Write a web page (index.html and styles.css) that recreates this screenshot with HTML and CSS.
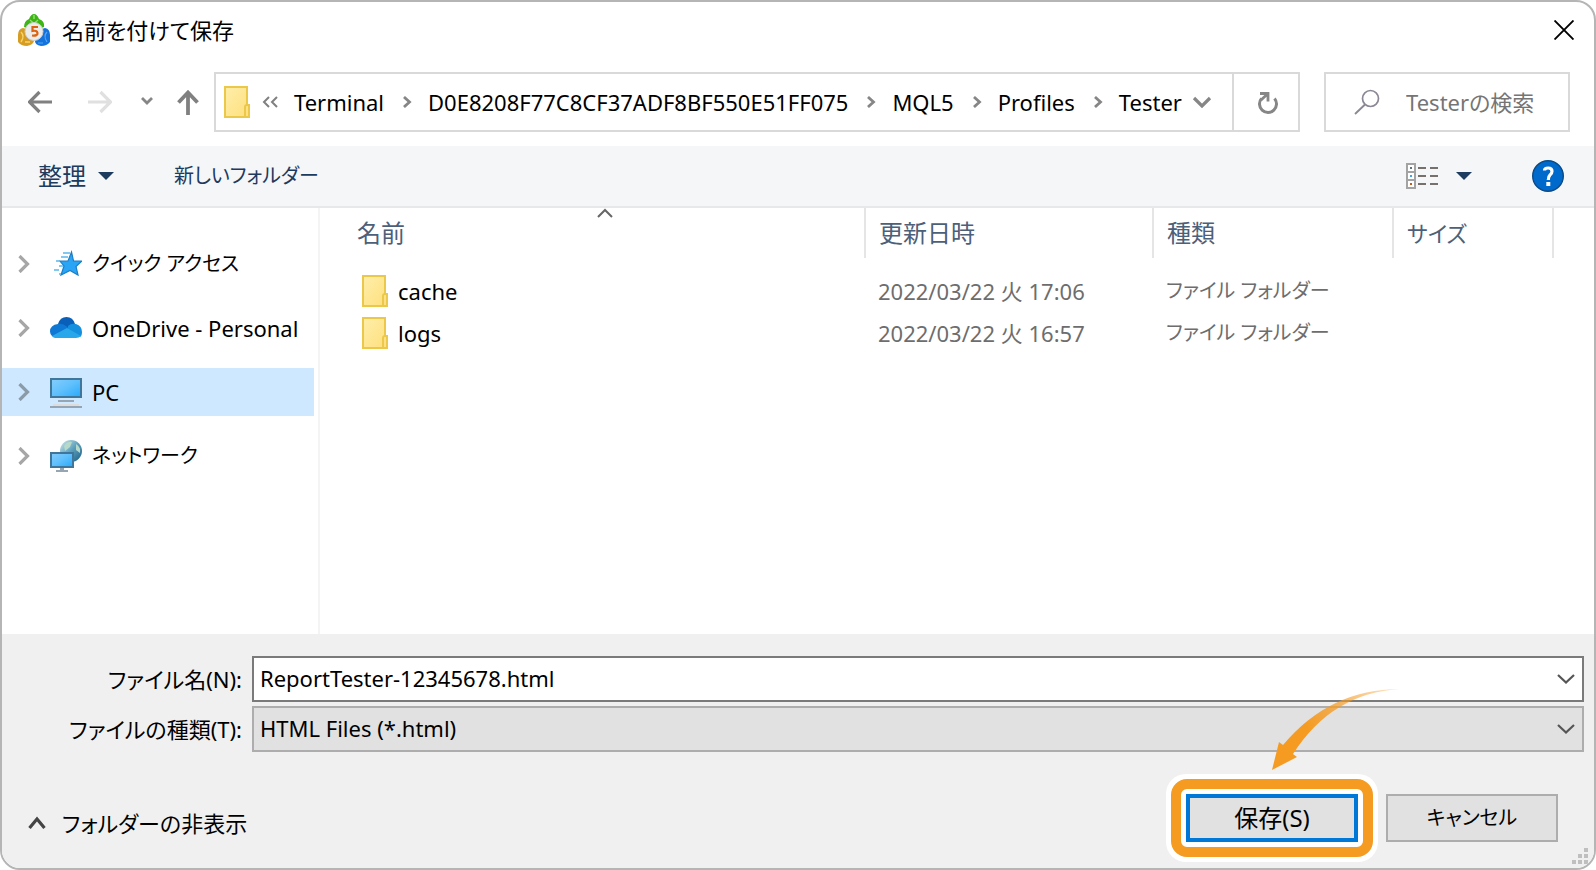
FILE: index.html
```html
<!DOCTYPE html>
<html lang="ja">
<head>
<meta charset="utf-8">
<meta name="viewport" content="width=device-width, initial-scale=1">
<title>名前を付けて保存</title>
<link rel="stylesheet" href="styles.css">
</head>
<body>
<svg class="defs" aria-hidden="true">
  <defs>
    <linearGradient id="folder-fill" x1="0" y1="0" x2="1" y2="1"><stop offset="0" stop-color="#ffeeaa"/><stop offset="1" stop-color="#fedf7c"/></linearGradient>
    <linearGradient id="screen-fill" x1="0" y1="0" x2="1" y2="1"><stop offset="0" stop-color="#86cdfd"/><stop offset="0.5" stop-color="#5fc0fc"/><stop offset="1" stop-color="#26a9fb"/></linearGradient>
    <linearGradient id="globe-fill" x1="0" y1="0" x2="1" y2="1"><stop offset="0" stop-color="#d5e9ea"/><stop offset="0.5" stop-color="#5ba0bd"/><stop offset="1" stop-color="#1c5b80"/></linearGradient>
    <linearGradient id="arrow-fill" gradientUnits="userSpaceOnUse" x1="128" y1="0" x2="40" y2="50"><stop offset="0" stop-color="#f59b22" stop-opacity="0.25"/><stop offset="1" stop-color="#f59b22"/></linearGradient>
    <symbol id="folder" viewBox="0 0 26 32"><path d="M1 1H23V19H25V31H1Z" fill="url(#folder-fill)" stroke="#ecc84a" stroke-width="2"/><path d="M21 31V21q0-2 2-2" fill="none" stroke="#ecc84a" stroke-width="2"/></symbol>
    <symbol id="crumb-arrow" viewBox="0 0 10 12"><path d="M2 1L7.500 6L2 11" fill="none" stroke="#868686" stroke-width="2.800"/></symbol>
    <symbol id="tree-arrow" viewBox="0 0 12 18"><path d="M1.500 1L9.500 9L1.500 17" fill="none" stroke="currentColor" stroke-width="3.200"/></symbol>
    <symbol id="drop" viewBox="0 0 16 8"><path d="M0 0H16L8 8Z" fill="#1d3a5f"/></symbol>
    <symbol id="combo-arrow" viewBox="0 0 18 10"><path d="M1 1L9 8.500L17 1" fill="none" stroke="#555" stroke-width="2.200"/></symbol>
  </defs>
</svg>
<main class="dialog">
  <header class="titlebar">
    <svg class="app-icon" viewBox="0 0 32 32" aria-hidden="true">
      <path d="M6 13Q6 7 11 5Q13 0 16 0T21 5Q27 7 26 13L16 17Z" fill="#3db615"/>
      <path d="M16 1V5M12 6Q15 8 15 10M20 6Q17 8 17 10" stroke="#8de36b" stroke-width="1.500" fill="none"/>
      <path d="M5 14Q0 15 0 21V28Q3 32 9 32Q15 31 16 27L12 16Z" fill="#d69d22"/>
      <path d="M3 18Q7 22 3 28M7 28H12" stroke="#f7d267" stroke-width="1.500" fill="none"/>
      <path d="M27 14Q32 15 32 21V28Q29 32 23 32Q17 31 17 27L21 16Z" fill="#1472dc"/>
      <path d="M29 18Q25 22 29 28M20 29H25" stroke="#54a5f6" stroke-width="1.200" fill="none"/>
      <circle cx="16" cy="17.500" r="9" fill="#ececea" stroke="#cfcfcf"/>
      <path d="M20 13H14.500V17Q19 16 19.500 19T14 21.500" fill="none" stroke="#dd6310" stroke-width="2.200"/>
    </svg>
    <h1 class="title">名前を付けて保存</h1>
    <button class="icon-button" aria-label="閉じる"><svg width="20" height="20" viewBox="0 0 20 20"><path d="M0.500 0.500L19.500 19.500M19.500 0.500L0.500 19.500" stroke="#000" stroke-width="1.900"/></svg></button>
  </header>

  <nav class="navbar">
    <div class="history">
      <button class="icon-button" aria-label="戻る"><svg width="24" height="24" viewBox="0 0 24 24"><path d="M24 12H2M11.500 2L1.500 12L11.500 22" fill="none" stroke="#808080" stroke-width="3.200"/></svg></button>
      <button class="icon-button forward" aria-label="進む"><svg width="24" height="24" viewBox="0 0 24 24"><path d="M0 12H22M12.500 2L22.500 12L12.500 22" fill="none" stroke="#e0e0e0" stroke-width="3.200"/></svg></button>
      <button class="icon-button recent" aria-label="最近表示した場所"><svg width="12" height="24" viewBox="0 0 12 24"><path d="M1 8L6 13L11 8" fill="none" stroke="#868686" stroke-width="2.800"/></svg></button>
      <button class="icon-button up" aria-label="上へ"><svg width="22" height="26" viewBox="0 0 22 26"><path d="M11 26V3M1.500 13.500L11 3.500L20.500 13.500" fill="none" stroke="#808080" stroke-width="3.800"/></svg></button>
    </div>
    <div class="address">
      <div class="crumbs">
        <svg class="folder" aria-hidden="true"><use href="#folder"/></svg>
        <svg class="overflow" width="16" height="12" viewBox="0 0 16 12"><path d="M7 1L2 6L7 11M15 1L10 6L15 11" fill="none" stroke="#808080" stroke-width="2"/></svg>
        <button class="crumb">Terminal</button><svg class="sep"><use href="#crumb-arrow"/></svg>
        <button class="crumb">D0E8208F77C8CF37ADF8BF550E51FF075</button><svg class="sep"><use href="#crumb-arrow"/></svg>
        <button class="crumb">MQL5</button><svg class="sep"><use href="#crumb-arrow"/></svg>
        <button class="crumb">Profiles</button><svg class="sep"><use href="#crumb-arrow"/></svg>
        <button class="crumb">Tester</button>
        <button class="icon-button more" aria-label="以前の場所"><svg width="20" height="12" viewBox="0 0 20 12"><path d="M2 2L10 10L18 2" fill="none" stroke="#868686" stroke-width="3.200"/></svg></button>
      </div>
      <button class="icon-button refresh" aria-label="最新の情報に更新"><svg width="20" height="22" viewBox="0 0 20 22"><path d="M3.500 6.500A8.500 8.500 0 1 0 16.500 6.500" fill="none" stroke="#868686" stroke-width="3"/><path d="M2 1.500H10V9.500M9.500 2L3 8" fill="none" stroke="#868686" stroke-width="2.800"/></svg></button>
    </div>
    <label class="search">
      <svg width="26" height="26" viewBox="0 0 26 26" aria-hidden="true"><circle cx="16.500" cy="9.500" r="8" fill="none" stroke="#8c8794" stroke-width="1.700"/><path d="M11 15.500L1 25" stroke="#8c8794" stroke-width="1.900"/></svg>
      <input type="text" class="search-input" placeholder="Testerの検索" aria-label="Testerの検索">
    </label>
  </nav>

  <div class="toolbar">
    <button class="tool">整理<svg class="drop"><use href="#drop"/></svg></button>
    <button class="tool kana">新しいフォルダー</button>
    <button class="tool view" aria-label="表示方法の変更">
      <svg width="32" height="26" viewBox="0 0 32 26"><path d="M1 1H9V25H1ZM1 9H9M1 17H9" fill="#fff" stroke="#a3a3a3" stroke-width="2"/><path d="M12 5H20M24 5H32M12 13H20M24 13H32M12 21H20M24 21H32" stroke="#77716d" stroke-width="2"/><path d="M4 4H6V6H4Z" fill="#5f7280"/><path d="M4 12H6V14H4Z" fill="#3da4e9"/><path d="M4 20H6V22H4Z" fill="#c75b12"/></svg>
      <svg class="drop"><use href="#drop"/></svg>
    </button>
    <button class="icon-button" aria-label="ヘルプ"><svg width="32" height="32" viewBox="0 0 32 32"><circle cx="16" cy="16" r="15.300" fill="#0069cc" stroke="#0b4a85" stroke-width="1.400"/><path d="M12.500 10.500Q12.500 8 16.200 8Q20 8 20 11.300Q20 13.500 18 15Q16.300 16.500 16.300 20" fill="none" stroke="#fff" stroke-width="3.200"/><path d="M14.300 22H18.300V26H14.300Z" fill="#fff"/></svg></button>
  </div>

  <div class="content">
    <ul class="tree">
      <li><a class="node kana" href="#"><svg class="tree-arrow"><use href="#tree-arrow"/></svg>
        <svg class="place" viewBox="0 0 32 32"><path d="M21.500 4L23.500 13H32L26 18.500L28 27L20 22.500L11 27L14 18L10 13H18Z" fill="#2aa5f5" stroke="#1b7fc8" stroke-width="1.200"/><path d="M13 5H20M11 9H18M6 13H10M9 18H13M4 22H9M9 26H11" stroke="#58b7ee" stroke-width="1.500"/></svg>クイック アクセス</a></li>
      <li><a class="node" href="#"><svg class="tree-arrow"><use href="#tree-arrow"/></svg>
        <svg class="place" viewBox="0 0 32 32"><path d="M8 12Q10 5 16.500 5T25 12L18 19Z" fill="#0a5fb8"/><path d="M2 24Q0 22 0 19.500Q0 13 8 12Q12 11 16 14L20 17L6 26Z" fill="#0f78d4"/><path d="M18 14Q21 11 26 12Q32 14 32 20Q32 24 30 25L18 19Z" fill="#1490df"/><path d="M2 24L17 16L31 24Q29 26 26 26H6Q3 26 2 24Z" fill="#28a8ea"/></svg>OneDrive - Personal</a></li>
      <li><a class="node selected" href="#" aria-current="true"><svg class="tree-arrow"><use href="#tree-arrow"/></svg>
        <svg class="place" viewBox="0 0 32 32"><path d="M1 3H31V21H1Z" fill="url(#screen-fill)" stroke="#3f7699" stroke-width="2"/><path d="M8 25H24M0 31H32" stroke="#95a5b3" stroke-width="2"/><path d="M3 29H29" stroke="#dcdcdc" stroke-width="2"/></svg>PC</a></li>
      <li><a class="node kana" href="#"><svg class="tree-arrow"><use href="#tree-arrow"/></svg>
        <svg class="place" viewBox="0 0 32 32"><circle cx="21" cy="11" r="11" fill="url(#globe-fill)"/><path d="M14 6Q17 1 22 2L20 7L15 11ZM26 4Q31 7 30 13L26 10Z" fill="#b7d9c9"/><path d="M1 13H23V27H1Z" fill="url(#screen-fill)" stroke="#3f7699" stroke-width="2"/><path d="M6 31H18M10 29H14" stroke="#95a5b3" stroke-width="2"/></svg>ネットワーク</a></li>
    </ul>
    <div class="files">
      <table class="list">
        <colgroup><col class="c-name"><col class="c-date"><col class="c-type"><col class="c-size"><col></colgroup>
        <thead><tr>
          <th scope="col" class="sorted" aria-sort="ascending">名前<svg class="sort" width="16" height="10" viewBox="0 0 16 10"><path d="M1 9L8 2L15 9" fill="none" stroke="#666" stroke-width="2"/></svg></th>
          <th scope="col">更新日時</th><th scope="col">種類</th><th scope="col" class="size">サイズ</th><td></td>
        </tr></thead>
        <tbody>
          <tr><td><span class="file"><svg class="folder"><use href="#folder"/></svg>cache</span></td><td>2022/03/22 火 17:06</td><td class="kana">ファイル フォルダー</td><td></td><td></td></tr>
          <tr><td><span class="file"><svg class="folder"><use href="#folder"/></svg>logs</span></td><td>2022/03/22 火 16:57</td><td class="kana">ファイル フォルダー</td><td></td><td></td></tr>
        </tbody>
      </table>
    </div>
  </div>

  <footer class="footer">
    <div class="fields">
      <label for="filename">ファイル名(N):</label>
      <div class="combo">
        <input id="filename" class="combo-field" type="text" value="ReportTester-12345678.html">
        <svg class="combo-arrow"><use href="#combo-arrow"/></svg>
      </div>
      <label for="filetype">ファイルの種類(T):</label>
      <div class="combo">
        <select id="filetype" class="combo-field type"><option>HTML Files (*.html)</option></select>
        <svg class="combo-arrow"><use href="#combo-arrow"/></svg>
      </div>
    </div>
    <div class="actions">
      <button class="toggle"><svg width="18" height="14" viewBox="0 0 18 14"><path d="M1.500 12L9 3L16.500 12" fill="none" stroke="#444" stroke-width="3.200"/></svg>フォルダーの非表示</button>
      <div class="save-wrap">
        <button class="action save">保存(S)</button>
        <svg class="pointer" width="130" height="84" viewBox="0 0 130 84" aria-hidden="true"><path d="M128 2Q58 2 11 58L7 55L0 83L25 70L21 67Q60 6 128 2Z" fill="url(#arrow-fill)"/></svg>
      </div>
      <button class="action kana">キャンセル</button>
    </div>
    <svg class="grip" width="16" height="16" viewBox="0 0 16 16" aria-hidden="true"><path d="M12 0H16V4H12ZM6 6H10V10H6ZM12 6H16V10H12ZM0 12H4V16H0ZM6 12H10V16H6ZM12 12H16V16H12Z" fill="#bfbfbf"/></svg>
  </footer>
</main>
</body>
</html>
```
FILE: styles.css
```css
* { box-sizing: border-box; }

body {
  margin: 0;
  background: #fff;
  color: #000;
  font: 22px/32px "Noto Sans", "Noto Sans CJK JP", sans-serif;
  font-feature-settings: "palt";
}

button, input, select {
  font: inherit;
  font-feature-settings: inherit;
  color: inherit;
  margin: 0;
  border-radius: 0;
}

button {
  padding: 0;
  border: 0;
  background: none;
  white-space: nowrap;
}

svg { display: block; flex: none; }
.defs { position: absolute; width: 0; height: 0; }
.folder { width: 26px; height: 32px; }
.icon-button { display: flex; align-items: center; justify-content: center; }

.dialog {
  display: flex;
  flex-direction: column;
  min-height: 100vh;
  border: 2px solid #b5b5b5;
  border-radius: 20px;
  overflow: hidden;
}

.titlebar {
  display: flex;
  align-items: center;
  height: 56px;
  padding: 0 20px 0 16px;
}
.app-icon { width: 32px; height: 32px; }
.title { flex: 1; margin: 0 0 0 12px; font-size: 22px; font-weight: 400; }

.navbar {
  display: flex;
  align-items: center;
  gap: 24px;
  padding: 14px 24px;
}
.history { display: flex; align-items: center; margin: 0 -9px 0 2px; }
.forward { margin-left: 36px; }
.recent { margin-left: 29px; }
.up { margin-left: 24px; }

.address {
  display: flex;
  flex: 1;
  height: 60px;
  border: 2px solid #d9d9d9;
}
.crumbs { display: flex; flex: 1; align-items: center; padding-left: 8px; }
.overflow { margin: 0 16px 0 12px; }
.sep { width: 10px; height: 12px; margin: 0 16px 0 18px; }
.more { margin-left: 10px; }
.refresh { width: 66px; padding: 2px 0 0 4px; border-left: 2px solid #d9d9d9; }

.search {
  display: flex;
  align-items: center;
  gap: 26px;
  width: 246px;
  height: 60px;
  padding-left: 28px;
  border: 2px solid #d9d9d9;
}
.search-input { flex: 1; min-width: 0; padding: 0; border: 0; background: none; }
.search-input::placeholder { color: #757575; opacity: 1; }

.toolbar {
  display: flex;
  align-items: center;
  gap: 60px;
  height: 62px;
  padding: 0 30px 0 36px;
  background: #f4f6f8;
  border-bottom: 2px solid #e6e8ea;
  color: #1d3a5f;
}
.tool { display: flex; align-items: center; gap: 12px; font-size: 24px; }
.drop { width: 16px; height: 8px; }
.view { gap: 18px; margin-left: auto; }
.kana { font-size: 20px; }

.content { display: flex; flex: 1; }
.tree {
  width: 318px;
  margin: 0;
  padding: 32px 4px 0 0;
  border-right: 2px solid #f4f4f4;
  list-style: none;
}
.tree li { margin-bottom: 16px; }
.node {
  display: flex;
  align-items: center;
  height: 48px;
  padding-left: 16px;
  color: inherit;
  text-decoration: none;
  white-space: nowrap;
}
.selected { background: #cde8ff; }
.tree-arrow { width: 12px; height: 18px; color: #a6a6a6; }
.selected .tree-arrow { color: #8b9ba8; }
.place { width: 32px; height: 32px; margin: 0 10px 0 20px; }

.files { flex: 1; min-width: 0; }
.list { width: 100%; table-layout: fixed; border-collapse: collapse; color: #6d6d6d; }
.c-name { width: 545px; }
.c-date { width: 288px; }
.c-type { width: 240px; }
.c-size { width: 160px; }
.list th, .list td { padding: 0 0 0 13px; text-align: left; white-space: nowrap; }
.list th {
  height: 50px;
  border-right: 2px solid #e5e5e5;
  color: #4c607a;
  font-size: 24px;
  font-weight: 400;
}
.list .size { font-size: 22px; }
.list th:first-child { padding-left: 37px; }
.list tbody td { height: 42px; }
.list tbody td:first-child { padding-left: 42px; }
.list tbody::before { content: ""; display: table-row; height: 12px; }
.sorted { position: relative; }
.sort { position: absolute; top: 0; left: 277px; }
.file { display: flex; align-items: center; gap: 10px; color: #000; }

.footer { position: relative; padding: 22px 10px 26px; background: #f0f0f0; }
.fields {
  display: grid;
  grid-template-columns: 230px 1fr;
  gap: 4px 10px;
  align-items: center;
}
.fields label { text-align: right; white-space: nowrap; }
.combo { display: grid; align-items: center; }
.combo-field {
  grid-area: 1 / 1;
  width: 100%;
  height: 46px;
  padding: 0 48px 2px 6px;
  border: 2px solid #7a7a7a;
  background: #fff;
  appearance: none;
}
.type { border-color: #adadad; background: #e1e1e1; }
.combo-arrow {
  grid-area: 1 / 1;
  justify-self: end;
  width: 18px;
  height: 10px;
  margin-right: 9px;
  pointer-events: none;
}

.actions {
  display: flex;
  align-items: center;
  gap: 28px;
  margin-top: 42px;
  padding: 0 26px 0 16px;
}
.toggle { display: flex; align-items: center; gap: 16px; margin-right: auto; padding-top: 10px; }
.action {
  width: 172px;
  height: 48px;
  border: 2px solid #adadad;
  background: #e1e1e1;
}
.save-wrap { position: relative; isolation: isolate; }
.save { display: block; border: 4px solid #0078d7; font-size: 24px; }
.save-wrap::before,
.save-wrap::after {
  content: "";
  position: absolute;
  z-index: -1;
}
.save-wrap::before { inset: -20px; border-radius: 20px; background: #fff; }
.save-wrap::after { inset: -15px; border: 10px solid #f59b22; border-radius: 16px; }
.pointer { position: absolute; left: 86px; bottom: 71px; pointer-events: none; }
.grip { position: absolute; right: 6px; bottom: 4px; }
```
